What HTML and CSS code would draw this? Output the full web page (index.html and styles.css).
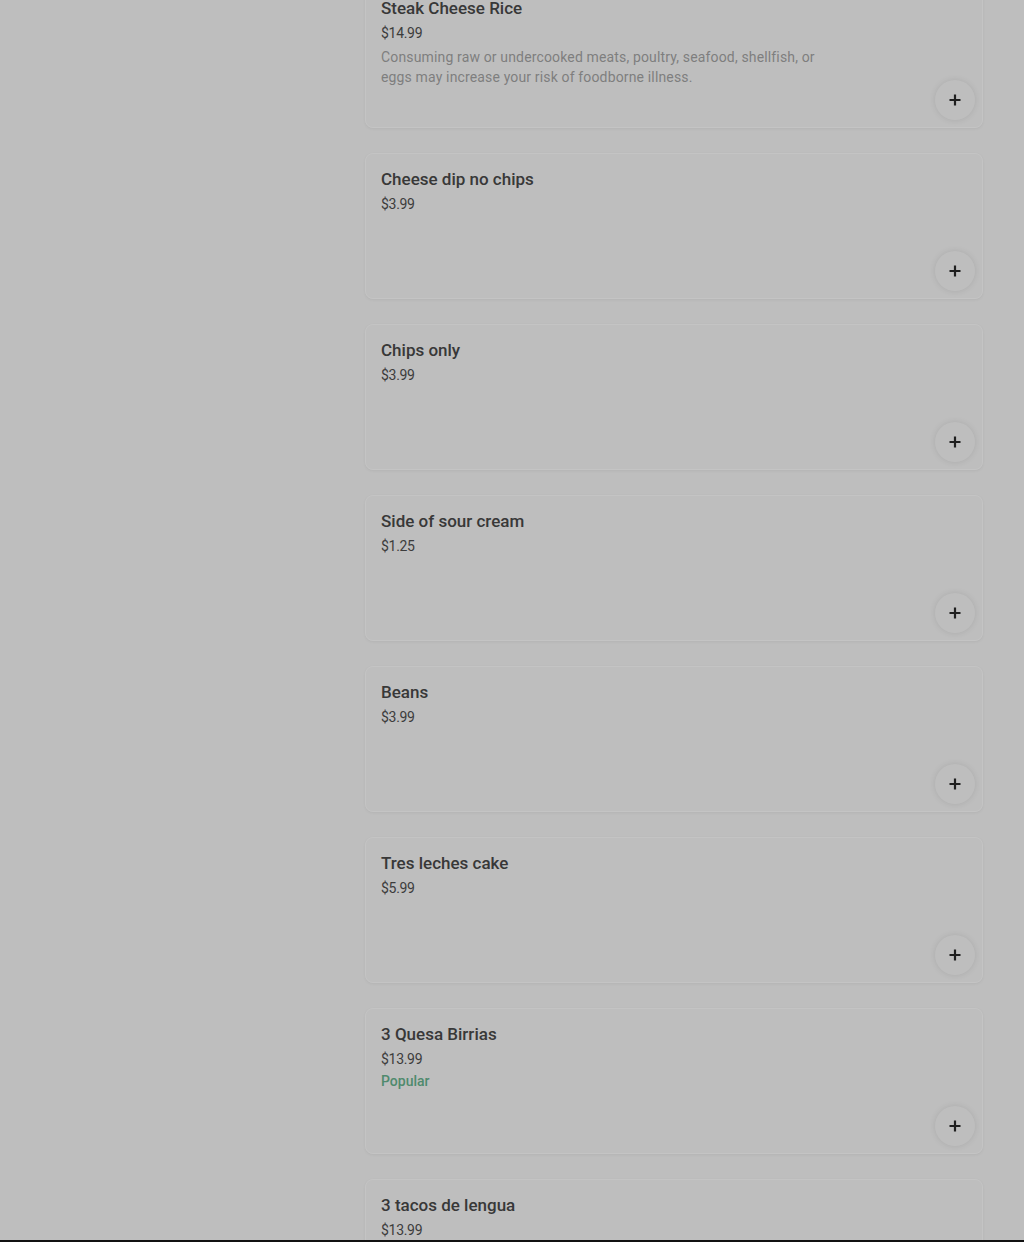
FILE: index.html
```html
<!DOCTYPE html>
<html lang="en">
<head>
<meta charset="utf-8">
<title>Menu</title>
<link rel="stylesheet" href="styles.css">
</head>
<body>
<main class="menu">
  <section class="item">
    <div class="info">
      <h3 class="name">Steak Cheese Rice</h3>
      <div class="price">$14.99</div>
      <p class="desc">Consuming raw or undercooked meats, poultry, seafood, shellfish, or eggs may increase your risk of foodborne illness.</p>
    </div>
    <button class="add" aria-label="Add"><svg viewBox="0 0 12 12" width="12" height="12"><path d="M6 0.5v11M0.5 6h11" stroke="#1f1f1f" stroke-width="2.2" fill="none"/></svg></button>
  </section>
  <section class="item">
    <div class="info">
      <h3 class="name">Cheese dip no chips</h3>
      <div class="price">$3.99</div>
    </div>
    <button class="add" aria-label="Add"><svg viewBox="0 0 12 12" width="12" height="12"><path d="M6 0.5v11M0.5 6h11" stroke="#1f1f1f" stroke-width="2.2" fill="none"/></svg></button>
  </section>
  <section class="item">
    <div class="info">
      <h3 class="name">Chips only</h3>
      <div class="price">$3.99</div>
    </div>
    <button class="add" aria-label="Add"><svg viewBox="0 0 12 12" width="12" height="12"><path d="M6 0.5v11M0.5 6h11" stroke="#1f1f1f" stroke-width="2.2" fill="none"/></svg></button>
  </section>
  <section class="item">
    <div class="info">
      <h3 class="name">Side of sour cream</h3>
      <div class="price">$1.25</div>
    </div>
    <button class="add" aria-label="Add"><svg viewBox="0 0 12 12" width="12" height="12"><path d="M6 0.5v11M0.5 6h11" stroke="#1f1f1f" stroke-width="2.2" fill="none"/></svg></button>
  </section>
  <section class="item">
    <div class="info">
      <h3 class="name">Beans</h3>
      <div class="price">$3.99</div>
    </div>
    <button class="add" aria-label="Add"><svg viewBox="0 0 12 12" width="12" height="12"><path d="M6 0.5v11M0.5 6h11" stroke="#1f1f1f" stroke-width="2.2" fill="none"/></svg></button>
  </section>
  <section class="item">
    <div class="info">
      <h3 class="name">Tres leches cake</h3>
      <div class="price">$5.99</div>
    </div>
    <button class="add" aria-label="Add"><svg viewBox="0 0 12 12" width="12" height="12"><path d="M6 0.5v11M0.5 6h11" stroke="#1f1f1f" stroke-width="2.2" fill="none"/></svg></button>
  </section>
  <section class="item">
    <div class="info">
      <h3 class="name">3 Quesa Birrias</h3>
      <div class="price">$13.99</div>
      <div class="popular">Popular</div>
    </div>
    <button class="add" aria-label="Add"><svg viewBox="0 0 12 12" width="12" height="12"><path d="M6 0.5v11M0.5 6h11" stroke="#1f1f1f" stroke-width="2.2" fill="none"/></svg></button>
  </section>
  <section class="item">
    <div class="info">
      <h3 class="name">3 tacos de lengua</h3>
      <div class="price">$13.99</div>
    </div>
    <button class="add" aria-label="Add"><svg viewBox="0 0 12 12" width="12" height="12"><path d="M6 0.5v11M0.5 6h11" stroke="#1f1f1f" stroke-width="2.2" fill="none"/></svg></button>
  </section>
</main>
<div class="bottom-edge"></div>
</body>
</html>
```

FILE: styles.css
```css
html, body {
  margin: 0;
  padding: 0;
  background: #bebebe;
  height: 1242px;
  overflow: hidden;
}
body {
  font-family: Roboto, "Liberation Sans", Arial, sans-serif;
  color: #2f2f2f;
}
.menu {
  display: flex;
  flex-direction: column;
  gap: 25px;
  width: 618px;
  margin: -18px 0 0 365px;
}
.item {
  box-sizing: border-box;
  height: 146px;
  padding: 15px 7px 7px 15px;
  border: 1px solid #c4c4c4;
  border-radius: 8px;
  box-shadow: 0 1px 3px rgba(0, 0, 0, 0.06);
  display: flex;
  flex-direction: column;
}
.info {
  flex: 1 1 0;
  min-height: 0;
}
.name {
  margin: 0;
  font-size: 17px;
  line-height: 20px;
  font-weight: 500;
  color: #383838;
}
.price {
  margin-top: 5px;
  font-size: 14px;
  line-height: 20px;
  color: #3c3c3c;
  letter-spacing: -0.3px;
}
.desc {
  margin: 4px 0 0;
  max-width: 450px;
  font-size: 14px;
  line-height: 20px;
  color: #7e7e7e;
  letter-spacing: 0.15px;
}
.popular {
  margin-top: 2px;
  font-size: 14px;
  line-height: 20px;
  font-weight: 500;
  color: #4f8a6d;
}
.add {
  align-self: flex-end;
  width: 40px;
  height: 40px;
  flex: none;
  padding: 0;
  border: none;
  border-radius: 50%;
  background: #bebebe;
  box-shadow: 0 0 6px rgba(0, 0, 0, 0.1);
  display: flex;
  align-items: center;
  justify-content: center;
}
.bottom-edge {
  position: fixed;
  left: 0;
  right: 0;
  bottom: 0;
  height: 2px;
  background: #111;
}
```
